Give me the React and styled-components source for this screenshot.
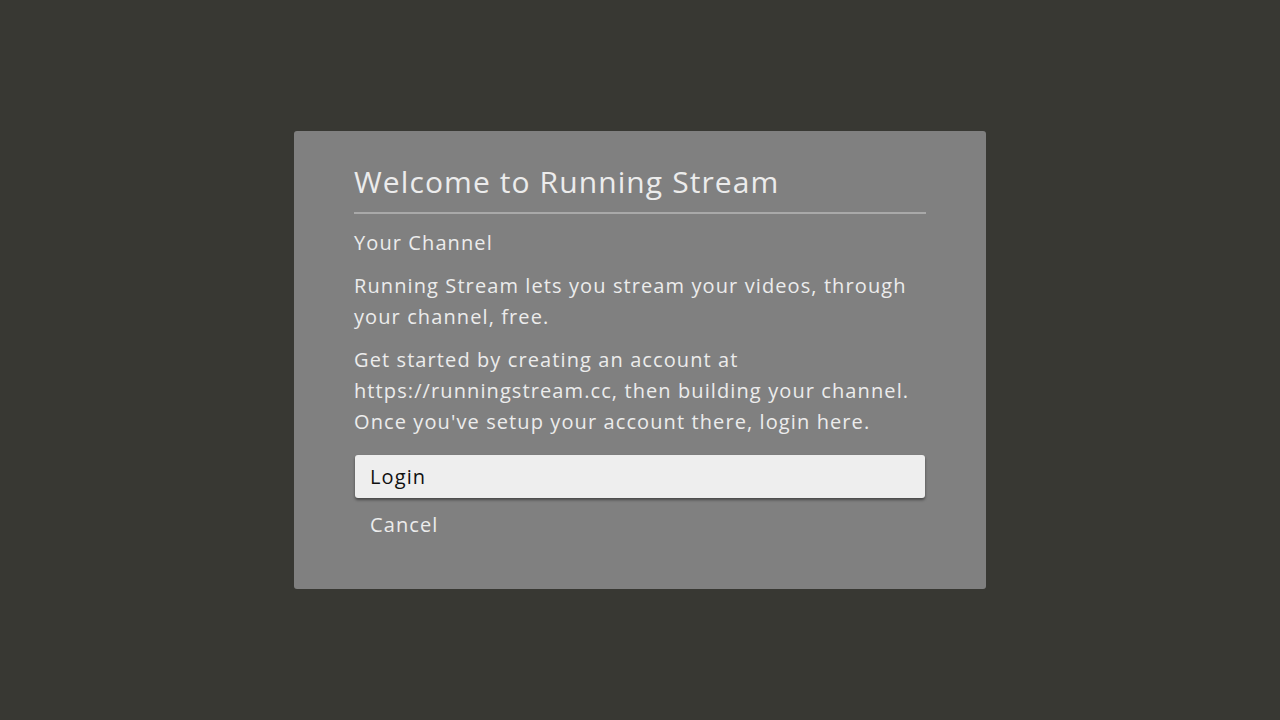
import React from "react"
import styled, { createGlobalStyle } from "styled-components"

const Global = createGlobalStyle`
  html, body {
    margin: 0;
    padding: 0;
    background: #383833;
  }
  body {
    font-family: "Open Sans", "DejaVu Sans", sans-serif;
  }
`

const Screen = styled.div`
  width: 1280px;
  height: 720px;
  display: flex;
  justify-content: center;
  padding-top: 131px;
  box-sizing: border-box;
`
const Dialog = styled.div`
  width: 692px;
  height: 458px;
  box-sizing: border-box;
  background: #808080;
  border-radius: 3px;
  padding: 31px 60px 0 60px;
  color: #ececec;
`
const Title = styled.h1`
  margin: 0;
  font-size: 30px;
  font-weight: 400;
  line-height: 40px;
  letter-spacing: 1.1px;
  padding-bottom: 10px;
  border-bottom: 2px solid #a9a9a9;
`
const Subtitle = styled.div`
  font-size: 20px;
  line-height: 30px;
  letter-spacing: 1.1px;
  margin-top: 14px;
`
const Paragraph = styled.p`
  margin: 12px 0 0 0;
  font-size: 20px;
  line-height: 31px;
  letter-spacing: 1.1px;
`
const Buttons = styled.div`
  margin-top: 18px;
  display: flex;
  flex-direction: column;
  gap: 5px;
`
const Button = styled.div`
  height: 43px;
  margin: 0 1px;
  display: flex;
  align-items: center;
  padding: 0 15px;
  font-size: 20px;
  letter-spacing: 1.1px;
  border-radius: 3px;
  font-weight: ${props => (props.focused ? 500 : 400)};
  color: ${props => (props.focused ? "#111" : "#ececec")};
  background: ${props => (props.focused ? "#eeeeee" : "transparent")};
  box-shadow: ${props => (props.focused ? "0 2px 3px rgba(0,0,0,0.45)" : "none")};
`

const App = () => {
  return (
    <Screen>
      <Global />
      <Dialog>
        <Title>Welcome to Running Stream</Title>
        <Subtitle>Your Channel</Subtitle>
        <Paragraph>
          Running Stream lets you stream your videos, through your channel, free.
        </Paragraph>
        <Paragraph>
          Get started by creating an account at https://runningstream.cc, then
          building your channel. Once you've setup your account there, login here.
        </Paragraph>
        <Buttons>
          <Button focused>Login</Button>
          <Button>Cancel</Button>
        </Buttons>
      </Dialog>
    </Screen>
  )
}

export default App
